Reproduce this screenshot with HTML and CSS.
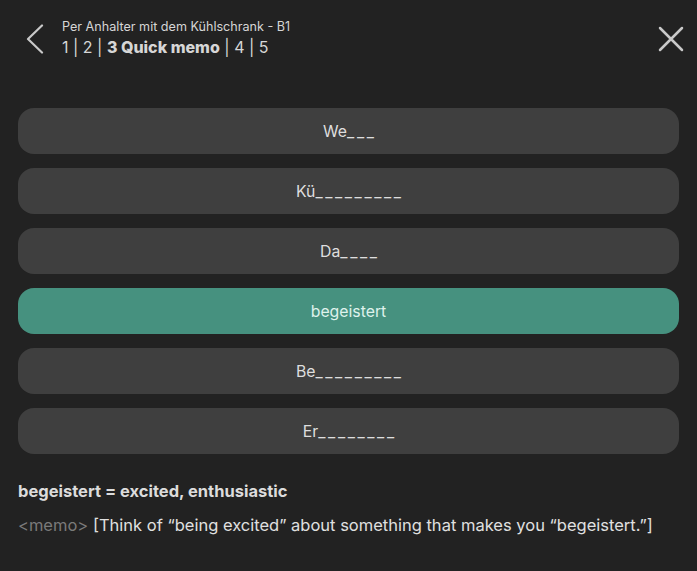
FILE: index.html
```html
<!DOCTYPE html>
<html lang="de">
<head>
<meta charset="utf-8">
<link rel="stylesheet" href="styles.css">
</head>
<body>
<div class="app">
  <header class="top">
    <button class="back" aria-label="Zurück">
      <svg width="18" height="30" viewBox="0 0 18 30"><path d="M16 1.5 L2 15 L16 28.5" fill="none" stroke="#c9c9c9" stroke-width="2.2" stroke-linecap="round" stroke-linejoin="round"/></svg>
    </button>
    <div class="titles">
      <div class="sub">Per Anhalter mit dem Kühlschrank - B1</div>
      <div class="steps">1 | 2 | <b>3 Quick memo</b> | 4 | 5</div>
    </div>
    <button class="close" aria-label="Schließen">
      <svg width="26" height="26" viewBox="0 0 26 26"><path d="M2 2 L24 24 M24 2 L2 24" fill="none" stroke="#c9c9c9" stroke-width="2.5" stroke-linecap="round"/></svg>
    </button>
  </header>
  <div class="options">
    <div class="opt">We<span class="gap">___</span></div>
    <div class="opt">Kü<span class="gap">_________</span></div>
    <div class="opt">Da<span class="gap">____</span></div>
    <div class="opt active">begeistert</div>
    <div class="opt">Be<span class="gap">_________</span></div>
    <div class="opt">Er<span class="gap">________</span></div>
  </div>
  <div class="memo">
    <p class="def">begeistert = excited, enthusiastic</p>
    <p class="note"><span class="tag">&lt;memo&gt;</span> [Think of “being excited” about something that makes you “begeistert.”]</p>
  </div>
</div>
</body>
</html>
```
FILE: styles.css
```css
html, body { margin: 0; padding: 0; background: #222222; }
body { font-family: "Inter", "Lato", sans-serif; color: #dcdcdc; }
.app { width: 697px; height: 571px; box-sizing: border-box; padding: 0 18px; }
.top { display: flex; align-items: flex-start; padding-top: 18px; height: 108px; box-sizing: border-box; }
button { background: none; border: 0; padding: 0; cursor: pointer; }
.back { margin: 6px 0 0 8px; width: 18px; height: 30px; }
.titles { margin-left: 18px; }
.sub { font-size: 12.6px; line-height: 17px; color: #d6d6d6; }
.steps { font-size: 16px; line-height: 22px; color: #d6d6d6; margin-top: 1px; }
.steps b { font-weight: 800; }
.close { margin-left: auto; margin-top: 8px; margin-right: -5px; width: 26px; height: 26px; }
.options { display: flex; flex-direction: column; gap: 14px; }
.opt { height: 46px; border-radius: 16px; background: #3f3f3f; display: flex; align-items: center; justify-content: center; font-size: 15.8px; color: #dedede; }
.opt.active { background: #46917f; color: #dff2ec; }
.gap { letter-spacing: 2.6px; margin-right: -2.6px; }
.memo { padding-top: 26px; }
.def { margin: 0; font-size: 16.5px; font-weight: 700; line-height: 22px; color: #dcdcdc; }
.note { margin: 12px 0 0; font-size: 16.5px; line-height: 22px; color: #e0e0e0; }
.tag { color: #7a7a7a; }
```
